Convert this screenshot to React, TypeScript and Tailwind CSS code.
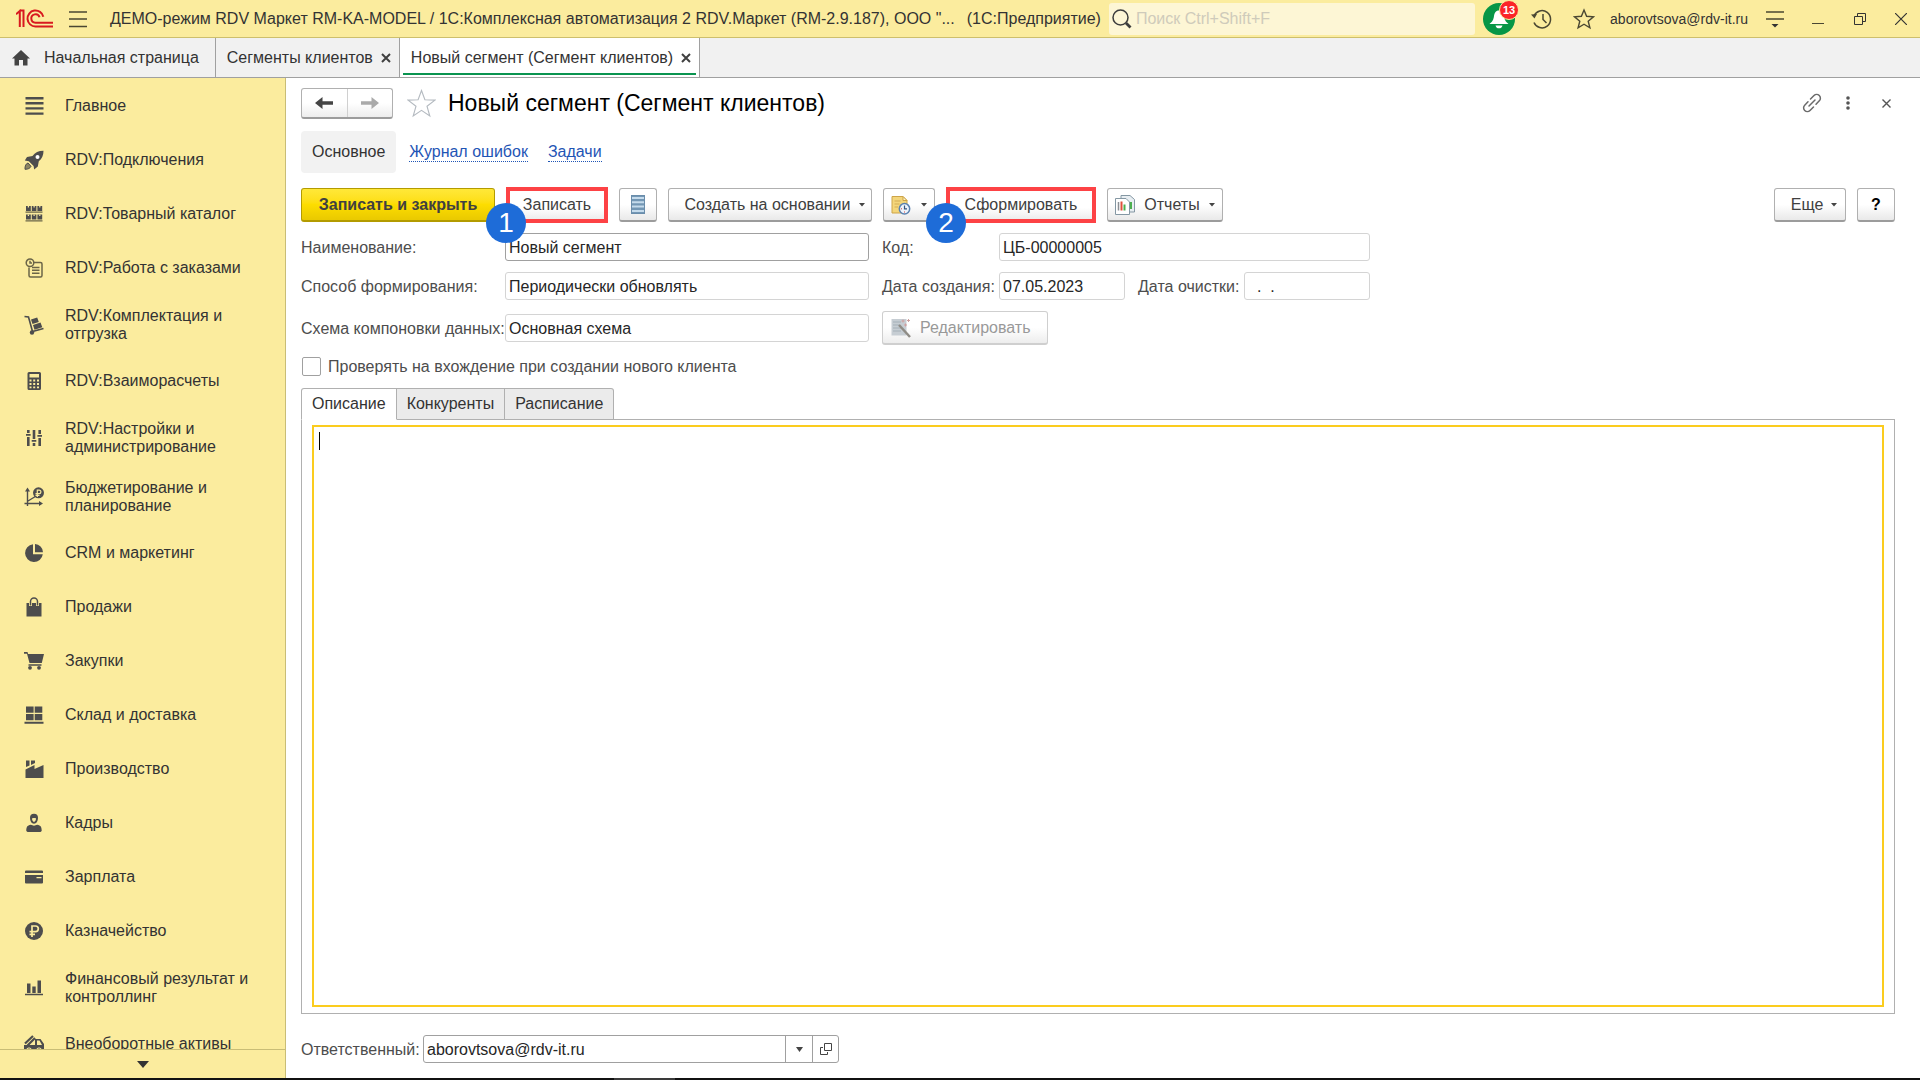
import React, { useState } from "react";
import clsx from "clsx";

type IconProps = { children: React.ReactNode };

// 20x20 glyph used in the section list
function SectionIcon({ children }: IconProps) {
  return (
    <svg className="h-5 w-5 shrink-0" viewBox="0 0 20 20" fill="#4d4d4d" stroke="none" aria-hidden="true">
      {children}
    </svg>
  );
}

const sections: { title: string; twoLines?: boolean; icon: React.ReactNode }[] = [
  {
    title: "Главное",
    icon: <path d="M1.5 1h18v2.4h-18zM1.5 6h18v2.4h-18zM1.5 11.2h18v2.4h-18zM1.5 16.4h18v2.4h-18z" />,
  },
  {
    title: "RDV:Подключения",
    icon: (
      <>
        <path d="M19.500.8c-5 0-8.500 1.700-11 5.200L3 7 .8 10.500l4 .8 4.800 4.800.6 3.400 3.600-3 1-5.200c3.200-2.500 4.700-5.800 4.700-10.500z" />
        <circle cx="13.500" cy="7" r="2" fill="#fff" />
        <path d="M4 13c-2 .5-3.200 3-3 6.300 3 0 5.200-1 6-3z" fill="#8d8562" stroke="#4d4d4d" />
      </>
    ),
  },
  {
    title: "RDV:Товарный каталог",
    icon: (
      <>
        <path d="M2 2h4.800v5H2zM7.800 2h4.600v5H7.800zM13.400 2h4.800v5h-4.800zM2 10.500h4.800v5H2zM7.800 10.500h4.600v5H7.800zM13.400 10.500h4.800v5h-4.800z" />
        <path d="M1.500 7.500h17v1.200h-17zM1.500 16.200h17v1.200h-17z" fill="#6b6548" />
        <path d="M3.800 2h1.200v1.500H3.800zM9.500 2h1.200v1.500H9.500zM15.200 2h1.200v1.500h-1.200zM3.800 10.500h1.200V12H3.800zM9.500 10.500h1.200V12H9.500zM15.200 10.500h1.200V12h-1.200z" fill="#fbec9e" />
      </>
    ),
  },
  {
    title: "RDV:Работа с заказами",
    icon: (
      <g fill="none" stroke="#6b6548" strokeWidth="1.500">
        <path d="M10 4.500h6.500a1.500 1.500 0 0 1 1.500 1.500v11.500a1.500 1.500 0 0 1-1.500 1.500h-10a1.500 1.500 0 0 1-1.500-1.500V9.500" />
        <circle cx="6" cy="4.800" r="3.800" />
        <path d="M6 2.800v2.200h2M8 9.500h7.500M8 12.300h7.500M8 15.200h7.500" />
      </g>
    ),
  },
  {
    title: "RDV:Комплектация и отгрузка",
    twoLines: true,
    icon: (
      <>
        <path d="M.5 1.500l4 .5 4 14.500 11-3" fill="none" stroke="#4d4d4d" strokeWidth="1.600" />
        <circle cx="8" cy="17.500" r="2.200" />
        <path d="M7 4.500l6.200-2 1.600 4.600-6.300 2zM9 10l7.500-2.400 1.800 4.600-7.800 2.500z" />
      </>
    ),
  },
  {
    title: "RDV:Взаиморасчеты",
    icon: (
      <path
        fillRule="evenodd"
        d="M5 1h10.500a1.500 1.500 0 0 1 1.500 1.500v15a1.500 1.500 0 0 1-1.500 1.500H5a1.500 1.500 0 0 1-1.500-1.500v-15A1.500 1.500 0 0 1 5 1zM5.500 3v3.500H15V3zM5.500 8.500v2h2v-2zM9.200 8.500v2h2v-2zM13 8.500v2h2v-2zM5.500 12v2h2v-2zM9.200 12v2h2v-2zM13 12v2h2v-2zM5.500 15.400v1.800h2v-1.800zM9.200 15.400v1.800h2v-1.800zM13 15.400v1.800h2v-1.800z"
      />
    ),
  },
  {
    title: "RDV:Настройки и администрирование",
    twoLines: true,
    icon: (
      <path d="M3 2h2.600v3H3zM2 6h4.600v1.800H2zM3 9h2.600v9H3zM8.700 2h2.600v9H8.700zM7.700 12h4.600v1.800H7.700zM8.700 15h2.600v3H8.700zM14.400 2H17v4h-2.600zM13.400 7H18v1.800h-4.600zM14.400 10H17v8h-2.600z" />
    ),
  },
  {
    title: "Бюджетирование и планирование",
    twoLines: true,
    icon: (
      <>
        <path d="M3.500 19V3M.5 16.500H17M4 14l9-5.500" fill="none" stroke="#4d4d4d" strokeWidth="1.400" />
        <path d="M3.500.500L6 4.500H1zM19 16.500l-4 2.500v-5z" />
        <circle cx="14.500" cy="5.800" r="5.500" />
        <path d="M13.300 10V3.200h1.900a1.600 1.600 0 0 1 0 3.400h-3.700M11.500 8.300h4" fill="none" stroke="#fbec9e" strokeWidth="1.200" />
      </>
    ),
  },
  {
    title: "CRM и маркетинг",
    icon: <path d="M9 1.200a8.900 8.900 0 1 0 9.800 10H9zM11 1v8.200h8A8.600 8.600 0 0 0 11 1z" />,
  },
  {
    title: "Продажи",
    icon: (
      <>
        <path d="M2.500 6h15v13.500h-15z" />
        <path d="M6.500 9V4.500a3.500 3.500 0 0 1 7 0V9" fill="none" stroke="#fbec9e" strokeWidth="3" />
        <path d="M6.500 8.500V4.500a3.500 3.500 0 0 1 7 0v4" fill="none" stroke="#4d4d4d" strokeWidth="1.500" />
      </>
    ),
  },
  {
    title: "Закупки",
    icon: (
      <>
        <path d="M0 1h3.500l.6 2H20l-2.200 9H5.500L3 2.800H0zM4.500 13.200h13v1.500h-13z" />
        <circle cx="6" cy="16.800" r="1.900" />
        <circle cx="15" cy="16.800" r="1.900" />
      </>
    ),
  },
  {
    title: "Склад и доставка",
    icon: <path d="M2 1.500h7.600v6.300H2zM10.700 1.500h7.600v6.300h-7.600zM2 8.900h7.600v6.300H2zM10.700 8.900h7.600v6.300h-7.600zM.5 16.800H19.500v2H.5z" />,
  },
  {
    title: "Производство",
    icon: <path d="M2 1.500h3.500v5L2 8zM7 1.500h4V4L7 6zM1.500 10.500L10.500 6v4l9-4v13h-18z" />,
  },
  {
    title: "Кадры",
    icon: (
      <>
        <path fillRule="evenodd" d="M10 .8c2.700 0 4 1.500 4 4 0 3-1.600 6-4 6s-4-3-4-6c0-2.500 1.300-4 4-4zm0 4.200c-1 0-1.800.2-2 .6 0 1.500.9 3.400 2 3.400s2-1.900 2-3.400c-.2-.4-1-.6-2-.6z" />
        <path d="M2.300 18c0-4 .8-5.500 4.500-6.200l3.200 1 3.200-1c3.700.7 4.500 2.200 4.500 6.200l-1.200 1h-13z" />
      </>
    ),
  },
  {
    title: "Зарплата",
    icon: (
      <>
        <path d="M2 3.500h16a1 1 0 0 1 1 1V6H1V4.500a1 1 0 0 1 1-1z" />
        <path fillRule="evenodd" d="M1 8h18v7.500a1 1 0 0 1-1 1H2a1 1 0 0 1-1-1zm11.500 2v1.300h5V10z" />
      </>
    ),
  },
  {
    title: "Казначейство",
    icon: (
      <>
        <circle cx="10" cy="10" r="9" />
        <path d="M8 16V5h3.500a2.800 2.800 0 0 1 0 5.600H5.500M5.500 13.300h5.500" fill="none" stroke="#fbec9e" strokeWidth="1.700" />
      </>
    ),
  },
  {
    title: "Финансовый результат и контроллинг",
    twoLines: true,
    icon: <path d="M3 5.500h3.500V15H3zM8.300 8.500h3.400V15H8.300zM13.500 2.500H17V15h-3.500zM1 15.800h18v1.400H1z" />,
  },
  {
    title: "Внеоборотные активы",
    icon: (
      <>
        <path d="M1 9.500L9 2M3.500 11.500L11 4" fill="none" stroke="#4d4d4d" strokeWidth="2.200" />
        <path fillRule="evenodd" d="M0 11h11V5h5.500l3.500 5v7H0zm13-4.500V11h5l-2.500-4.500z" />
        <circle cx="5" cy="16.500" r="2.600" stroke="#fbec9e" />
        <circle cx="15" cy="16.500" r="2.600" stroke="#fbec9e" />
      </>
    ),
  },
];

function Caret() {
  return (
    <svg className="h-1 w-[6px] shrink-0" viewBox="0 0 6 4" aria-hidden="true">
      <path d="M0 0h6L3 3.500z" fill="#444" />
    </svg>
  );
}

const buttonBase =
  "flex h-[34px] shrink-0 items-center justify-center rounded-[3px] border border-b-2 border-[#b0b0b0] border-b-[#9c9c9c] bg-gradient-to-b from-white from-50% to-[#e9e9e9] text-[#404040]";

function CommandButton({ className, ...rest }: React.ButtonHTMLAttributes<HTMLButtonElement>) {
  return <button type="button" className={clsx(buttonBase, className)} {...rest} />;
}

// Button with a red frame and a numbered marker over its corner
function MarkedButton({ step, label, className }: { step: number; label: string; className: string }) {
  return (
    <div className="relative shrink-0">
      <button
        type="button"
        className={clsx(
          "h-9 border-4 border-[#fd4245] bg-gradient-to-b from-white from-60% to-[#ededed] text-[#404040]",
          className
        )}
      >
        {label}
      </button>
      <span className="absolute -bottom-5 -left-5 flex h-10 w-10 items-center justify-center rounded-full bg-[#1e6cd8] text-[28px] text-white">
        {step}
      </span>
    </div>
  );
}

const fieldBase = "h-7 rounded-[3px] border bg-white px-[3px] pt-px text-[#262626] outline-none";

function TopBar() {
  return (
    <header className="flex h-[38px] shrink-0 items-center border-b border-[#cdbf6d] bg-[#fbec9e]">
      <svg className="ml-4 h-5 w-[38px] shrink-0" viewBox="0 0 38 20" fill="none" stroke="#d8191f" strokeWidth="2" aria-label="1С">
        <path d="M0 5.200l3.800-3.200v16M3.500 1.500h4v16.500" />
        <path d="M37 17.500H19.500a8 8 0 1 1 7.800-9.800M37 13.700H19.500a4.200 4.200 0 1 1 4-5.500" />
      </svg>
      <button type="button" aria-label="Меню" className="ml-[15px]">
        <svg className="h-[18px] w-[18px]" viewBox="0 0 18 18" stroke="#4a4732" strokeWidth="1.500" aria-hidden="true">
          <path d="M0 2h18M0 9h18M0 16.500h18" />
        </svg>
      </button>
      <span className="ml-[23px] whitespace-nowrap">
        ДЕМО-режим RDV Маркет RM-KA-MODEL / 1С:Комплексная автоматизация 2 RDV.Маркет (RM-2.9.187), ООО "...
      </span>
      <span className="ml-3 whitespace-nowrap">(1С:Предприятие)</span>
      <label className="ml-2 flex h-8 min-w-0 flex-1 items-center rounded-[3px] bg-[#fdf6d5] pl-[3px]">
        <svg className="h-5 w-5 shrink-0" viewBox="0 0 20 20" fill="none" stroke="#3d3d3d" aria-hidden="true">
          <circle cx="8.500" cy="8.500" r="7.500" strokeWidth="1.500" />
          <path d="M14 14l4.500 4.500" strokeWidth="2.800" />
        </svg>
        <input
          type="search"
          aria-label="Поиск"
          placeholder="Поиск Ctrl+Shift+F"
          className="ml-1 min-w-0 flex-1 bg-transparent outline-none placeholder:text-[#cfcbbb]"
        />
      </label>
      <button type="button" aria-label="Уведомления" className="relative ml-2 flex h-8 w-8 shrink-0 items-center justify-center rounded-full bg-[#069646]">
        <svg className="h-5 w-5" viewBox="0 0 20 20" fill="#fff" aria-hidden="true">
          <path d="M10 1.500c3.500 0 4.500 2.500 5 5.500.6 4 1.500 5.500 4.500 8H.5c3-2.500 3.900-4 4.500-8 .5-3 1.500-5.500 5-5.500zM6.500 16.500h7c-.5 2-1.800 2.800-3.500 2.800s-3-.8-3.500-2.800z" />
        </svg>
        <span className="absolute -right-1 -top-[3px] flex h-5 w-5 items-center justify-center rounded-full border border-[#fbec9e] bg-[#fb2428] text-[11px] font-bold text-white">
          13
        </span>
      </button>
      <button type="button" aria-label="История" className="ml-4">
        <svg className="h-[22px] w-[22px]" viewBox="0 0 22 22" fill="none" stroke="#4a4732" strokeWidth="1.500" aria-hidden="true">
          <path d="M3 8a8.600 8.600 0 1 1 0 6.500M12 6v5.500l3.500 3.500" />
          <path d="M0 6.500l6-.5-2.500 4.500z" fill="#4a4732" stroke="none" />
        </svg>
      </button>
      <button type="button" aria-label="Избранное" className="ml-5">
        <svg className="h-[22px] w-[22px]" viewBox="0 0 22 22" fill="none" stroke="#4a4732" strokeWidth="1.400" aria-hidden="true">
          <path d="M11 2l2.600 6.300 6.900.5-5.300 4.400 1.700 6.600L11 16.200l-5.900 3.600 1.700-6.600L1.500 8.800l6.900-.5z" />
        </svg>
      </button>
      <a href="#user" className="ml-[15px] text-[14px]">
        aborovtsova@rdv-it.ru
      </a>
      <button type="button" aria-label="Настройки" className="ml-[18px]">
        <svg className="h-[18px] w-[18px]" viewBox="0 0 18 18" stroke="#4a4732" strokeWidth="1.500" aria-hidden="true">
          <path d="M0 2h18M0 9h18" />
          <path d="M5.500 14h7L9 17.500z" fill="#333" stroke="none" />
        </svg>
      </button>
      <button type="button" aria-label="Свернуть" className="ml-7">
        <svg className="h-3 w-3" viewBox="0 0 12 12" stroke="#4a4732" aria-hidden="true">
          <path d="M0 10.500h12" />
        </svg>
      </button>
      <button type="button" aria-label="Развернуть" className="ml-[30px]">
        <svg className="h-3 w-3" viewBox="0 0 12 12" fill="none" stroke="#333" aria-hidden="true">
          <path d="M.5 3.500h8v8h-8zM3.500 3V.5h8v8H9" />
        </svg>
      </button>
      <button type="button" aria-label="Закрыть" className="ml-[29px] mr-[13px]">
        <svg className="h-3 w-3" viewBox="0 0 12 12" stroke="#333" strokeWidth="1.200" aria-hidden="true">
          <path d="M0 0l12 12M12 0L0 12" />
        </svg>
      </button>
    </header>
  );
}

function TabCross() {
  return (
    <svg className="h-[10px] w-[10px]" viewBox="0 0 10 10" stroke="#404040" strokeWidth="2" aria-hidden="true">
      <path d="M1 1l8 8M9 1L1 9" />
    </svg>
  );
}

function WindowTabs() {
  return (
    <nav className="flex h-10 shrink-0 border-b border-[#a0a0a0] bg-[#f1f1f1] text-[#333]">
      <a href="#home" className="flex items-center border-r border-[#a0a0a0] pl-3 pr-4">
        <svg className="mr-[14px] h-[18px] w-[18px]" viewBox="0 0 18 18" fill="#444" aria-hidden="true">
          <path d="M9 1l9 8.500h-2.500V16.500h-4.500v-5.500H7v5.500H2.500V9.500H0z" />
        </svg>
        Начальная страница
      </a>
      <div className="flex items-center border-r border-[#a0a0a0] pl-[11px] pr-2">
        <a href="#segments">Сегменты клиентов</a>
        <button type="button" aria-label="Закрыть вкладку" className="ml-2">
          <TabCross />
        </button>
      </div>
      <div className="relative flex items-center border-r border-[#a0a0a0] bg-white pl-[11px] pr-2">
        <a href="#segment">Новый сегмент (Сегмент клиентов)</a>
        <button type="button" aria-label="Закрыть вкладку" className="ml-2">
          <TabCross />
        </button>
        <span className="absolute bottom-[2px] left-[3px] right-[3px] h-[2px] bg-[#0a9450]" />
      </div>
    </nav>
  );
}

function Sidebar() {
  return (
    <aside className="flex w-[286px] shrink-0 flex-col border-r border-[#c9bd76] bg-[#fbec9e]">
      <nav className="min-h-0 flex-1 overflow-hidden pt-px">
        {sections.map(section => (
          <a
            key={section.title}
            href="#section"
            className={clsx("flex items-center pl-6 pr-7 leading-[18px]", section.twoLines ? "h-[59px]" : "h-[54px]")}
          >
            <SectionIcon>{section.icon}</SectionIcon>
            <span className="ml-[21px]">{section.title}</span>
          </a>
        ))}
      </nav>
      <button type="button" aria-label="Прокрутить вниз" className="flex h-[29px] shrink-0 items-center justify-center border-t border-[#c9bd76]">
        <svg className="h-[7px] w-3" viewBox="0 0 12 7" aria-hidden="true">
          <path d="M0 0h12L6 7z" fill="#333" />
        </svg>
      </button>
    </aside>
  );
}

function TitleRow() {
  return (
    <div className="flex h-[30px] items-center">
      <div className="flex h-[31px] w-[92px] shrink-0 rounded-[3px] border border-b-2 border-[#b0b0b0] border-b-[#9c9c9c] bg-gradient-to-b from-white from-50% to-[#ededed]">
        <button type="button" aria-label="Назад" className="flex flex-1 items-center justify-center border-r border-[#d0d0d0]">
          <svg className="h-3 w-[18px]" viewBox="0 0 18 12" fill="#444" aria-hidden="true">
            <path d="M7.500 0v4.200H18v3.600H7.500V12L0 6z" />
          </svg>
        </button>
        <button type="button" aria-label="Вперед" className="flex flex-1 items-center justify-center">
          <svg className="h-3 w-[18px]" viewBox="0 0 18 12" fill="#aaa" aria-hidden="true">
            <path d="M10.500 0v4.200H0v3.600h10.500V12L18 6z" />
          </svg>
        </button>
      </div>
      <button type="button" aria-label="В избранное" className="ml-[14px]">
        <svg className="h-[29px] w-[29px]" viewBox="0 0 29 29" fill="none" stroke="#b4bac0" strokeWidth="1.100" aria-hidden="true">
          <path d="M14.500 1.500l3.400 9.300 10 .3-7.900 6.100 2.800 9.800-8.300-5.700L6.200 27 9 17.200 1.100 11.100l10-.3z" />
        </svg>
      </button>
      <h1 className="ml-3 whitespace-nowrap text-[23px] text-black">Новый сегмент (Сегмент клиентов)</h1>
      <button type="button" aria-label="Получить ссылку" className="ml-auto">
        <svg className="h-5 w-5" viewBox="0 0 20 20" fill="none" stroke="#6a6a6a" strokeWidth="1.500" strokeLinecap="round" aria-hidden="true">
          <path d="M8.500 6l3.500-3.500a3.700 3.700 0 0 1 5.300 5.300L14 11.200M11.500 14L8 17.500a3.700 3.700 0 0 1-5.300-5.300L6 8.800M7 13l6-6" />
        </svg>
      </button>
      <button type="button" aria-label="Действия" className="ml-6">
        <svg className="h-[14px] w-1" viewBox="0 0 4 14" fill="#555" aria-hidden="true">
          <circle cx="2" cy="2" r="1.800" />
          <circle cx="2" cy="7" r="1.800" />
          <circle cx="2" cy="12" r="1.800" />
        </svg>
      </button>
      <button type="button" aria-label="Закрыть форму" className="ml-8 mr-1">
        <svg className="h-[9px] w-[9px]" viewBox="0 0 9 9" stroke="#555" strokeWidth="1.400" aria-hidden="true">
          <path d="M.5.5l8 8M8.500.5l-8 8" />
        </svg>
      </button>
    </div>
  );
}

function Toolbar() {
  return (
    <div className="mt-[14px] flex h-9 items-center gap-[11px]">
      <button
        type="button"
        className="h-[34px] w-[194px] shrink-0 rounded-[3px] border border-b-2 border-[#b39b00] bg-gradient-to-b from-[#ffe838] via-[#fddd00] to-[#e9c900] font-bold text-[#404040]"
      >
        Записать и закрыть
      </button>
      <MarkedButton step={1} label="Записать" className="w-[102px]" />
      <CommandButton className="w-[38px]" aria-label="Список">
        <svg className="h-[19px] w-[14px]" viewBox="0 0 14 19" aria-hidden="true">
          <rect x=".5" y=".5" width="13" height="18" fill="#7397b5" stroke="#6a8dab" />
          <path d="M1 3h12M1 7.300h12M1 11.600h12M1 15.900h12" stroke="#c5dbec" strokeWidth="2" />
        </svg>
      </CommandButton>
      <CommandButton className="w-[204px] gap-2 pl-[9px]">
        Создать на основании
        <Caret />
      </CommandButton>
      <CommandButton className="w-[52px] gap-[10px]" aria-label="Отложенные действия">
        <svg className="h-5 w-5" viewBox="0 0 20 20" aria-hidden="true">
          <path d="M1 1.500h11l4 4V18H1z" fill="#f4d67b" stroke="#cda449" />
          <path d="M12 1.500v4h4z" fill="#fff3c4" stroke="#cda449" />
          <path d="M3.500 6h6M3.500 9h5M3.500 12h3.500" stroke="#d3ac54" />
          <circle cx="13.500" cy="13.800" r="5.200" fill="#eef4fb" stroke="#5b82b0" strokeWidth="1.500" />
          <path d="M13.500 10.500v3.300h2.500" fill="none" stroke="#35557d" strokeWidth="1.200" />
          <path d="M10 13.800h1M13.500 16.500v1" stroke="#d8413a" />
        </svg>
        <Caret />
      </CommandButton>
      <MarkedButton step={2} label="Сформировать" className="w-[150px]" />
      <CommandButton className="w-[116px] gap-[9px]">
        <svg className="h-5 w-5" viewBox="0 0 20 20" aria-hidden="true">
          <path d="M6 .5h9l4.500 4V17H6z" fill="#e8eef2" stroke="#8497a3" />
          <path d="M16 7v7" stroke="#4caf50" strokeWidth="2" />
          <path d="M.5 3.500H11l3.500 3.500v12.500H.5z" fill="#fff" stroke="#8497a3" />
          <path d="M3.500 7v8.500" stroke="#8b8f94" strokeWidth="1.500" />
          <path d="M6.500 6.500v9" stroke="#e04f3c" strokeWidth="2" />
          <path d="M9.500 9.500v6" stroke="#4caf50" strokeWidth="2" />
        </svg>
        Отчеты
        <Caret />
      </CommandButton>
      <CommandButton className="ml-auto w-[72px] gap-2 pl-2">
        Еще
        <Caret />
      </CommandButton>
      <CommandButton className="w-[38px] text-black" aria-label="Справка">
        <span className="font-bold">?</span>
      </CommandButton>
    </div>
  );
}

function SegmentForm() {
  return (
    <div className="mt-[10px] flex flex-col gap-[11px] whitespace-nowrap">
      <div className="flex items-center">
        <label htmlFor="name" className="w-[204px] shrink-0 pt-px text-[#4d4d4d]">Наименование:</label>
        <input id="name" defaultValue="Новый сегмент" className={clsx(fieldBase, "w-[364px] border-[#a0a0a0]")} />
        <label htmlFor="code" className="ml-[13px] w-[117px] shrink-0 pt-px text-[#4d4d4d]">Код:</label>
        <input id="code" readOnly value="ЦБ-00000005" className={clsx(fieldBase, "w-[371px] border-[#d4d4d4]")} />
      </div>
      <div className="flex items-center">
        <label htmlFor="method" className="w-[204px] shrink-0 pt-px text-[#4d4d4d]">Способ формирования:</label>
        <input id="method" readOnly value="Периодически обновлять" className={clsx(fieldBase, "w-[364px] border-[#d4d4d4]")} />
        <label htmlFor="created" className="ml-[13px] w-[117px] shrink-0 pt-px text-[#4d4d4d]">Дата создания:</label>
        <div className="flex w-[371px] items-center">
          <input id="created" readOnly value="07.05.2023" className={clsx(fieldBase, "w-[126px] border-[#d4d4d4]")} />
          <label htmlFor="cleared" className="ml-[13px] mr-auto pt-px text-[#4d4d4d]">Дата очистки:</label>
          <input id="cleared" readOnly value="  .  ." className={clsx(fieldBase, "w-[126px] border-[#d4d4d4]")} />
        </div>
      </div>
      <div className="flex items-center">
        <label htmlFor="schema" className="w-[204px] shrink-0 pt-px text-[#4d4d4d]">Схема компоновки данных:</label>
        <input id="schema" readOnly value="Основная схема" className={clsx(fieldBase, "w-[364px] border-[#d4d4d4]")} />
        <button
          type="button"
          disabled
          className="ml-[13px] flex h-[34px] w-[166px] items-center rounded-[3px] border border-b-2 border-[#cfcfcf] bg-gradient-to-b from-white from-50% to-[#ededed] pl-2 text-[#999]"
        >
          <svg className="mr-[9px] h-5 w-5" viewBox="0 0 20 20" aria-hidden="true">
            <path d="M.5 1h15v16.500H.5z" fill="#c6cdd3" />
            <path d="M2 4h8M2 7h7M2 10h8M2 13h8" stroke="#a5b0b8" />
            <path d="M8 7l11 12" stroke="#8f8c86" strokeWidth="2.500" />
            <path d="M12 1.500v3M10.500 3h3M17.500 1v3M16 2.500h3M14.500 5.500v3M13 7h3" stroke="#cf9f9f" />
          </svg>
          Редактировать
        </button>
      </div>
    </div>
  );
}

const pages = ["Описание", "Конкуренты", "Расписание"];

export default function App() {
  const [page, setPage] = useState(pages[0]);
  const [description, setDescription] = useState("");

  return (
    <div className="flex h-screen flex-col bg-white font-['Liberation_Sans',Arial,sans-serif] text-[16px] leading-5 text-[#333]">
      <TopBar />
      <WindowTabs />
      <div className="flex min-h-0 flex-1">
        <Sidebar />
        <main className="flex min-w-0 flex-1 flex-col pb-[15px] pl-[15px] pr-[25px] pt-[10px]">
          <TitleRow />
          <nav className="mt-[13px] flex h-[42px] shrink-0 items-center">
            <span className="flex h-full items-center rounded-[4px] bg-[#f2f2f2] px-[11px]">Основное</span>
            <a href="#errors" className="ml-[13px] border-b border-dotted border-[#1f55b5] leading-[18px] text-[#1f55b5]">
              Журнал ошибок
            </a>
            <a href="#tasks" className="ml-5 border-b border-dotted border-[#1f55b5] leading-[18px] text-[#1f55b5]">
              Задачи
            </a>
          </nav>
          <Toolbar />
          <SegmentForm />
          <label className="mt-3 flex h-[19px] shrink-0 items-center text-[#4d4d4d]">
            <input type="checkbox" className="ml-px mr-[7px] h-[19px] w-[19px] appearance-none rounded-[2px] border border-[#a0a0a0] bg-white" />
            Проверять на вхождение при создании нового клиента
          </label>
          <div className="mt-3 flex h-8 shrink-0" role="tablist">
            {pages.map((title, i) => (
              <button
                key={title}
                type="button"
                role="tab"
                aria-selected={page === title}
                onClick={() => setPage(title)}
                className={clsx(
                  "relative border-b border-r border-t border-[#b0b0b0] px-[10px]",
                  i === 0 && "rounded-tl-[3px] border-l",
                  i === pages.length - 1 && "rounded-tr-[3px]",
                  page === title ? "z-10 border-b-white bg-white" : "bg-[#ebebeb]"
                )}
              >
                {title}
              </button>
            ))}
          </div>
          <div className="relative -mt-px flex min-h-0 flex-1 border border-[#b0b0b0] px-[10px] pb-[6px] pt-[5px]">
            <textarea
              aria-label="Описание"
              value={description}
              onChange={e => setDescription(e.target.value)}
              className="flex-1 resize-none border-2 border-[#fbcc1e] bg-white px-1 py-[5px] outline-none"
            />
            {/* text cursor */}
            <span className="absolute left-[17px] top-3 h-[18px] w-px bg-black" />
          </div>
          <div className="mt-[21px] flex h-7 shrink-0 items-center">
            <label htmlFor="owner" className="w-[122px] shrink-0 pt-px text-[#4d4d4d]">Ответственный:</label>
            <div className="flex h-full w-[416px] rounded-[3px] border border-[#a0a0a0]">
              <input id="owner" defaultValue="aborovtsova@rdv-it.ru" className="min-w-0 flex-1 px-[3px] pt-px text-[#262626] outline-none" />
              <button type="button" aria-label="Выбрать" className="flex w-[27px] items-center justify-center border-l border-[#a0a0a0]">
                <svg className="h-[5px] w-[7px]" viewBox="0 0 7 5" aria-hidden="true">
                  <path d="M0 0h7L3.500 5z" fill="#444" />
                </svg>
              </button>
              <button type="button" aria-label="Открыть" className="flex w-[26px] items-center justify-center border-l border-[#a0a0a0]">
                <svg className="h-3 w-3" viewBox="0 0 12 12" fill="none" stroke="#444" aria-hidden="true">
                  <path d="M4.500.5h7v7h-7zM3 4.500H.5v7h7V9" />
                </svg>
              </button>
            </div>
          </div>
        </main>
      </div>
      <div className="h-[2px] shrink-0 bg-[#111]">
        <div className="ml-[32%] h-full w-[61px] bg-[#3a3a3a]" />
      </div>
    </div>
  );
}
